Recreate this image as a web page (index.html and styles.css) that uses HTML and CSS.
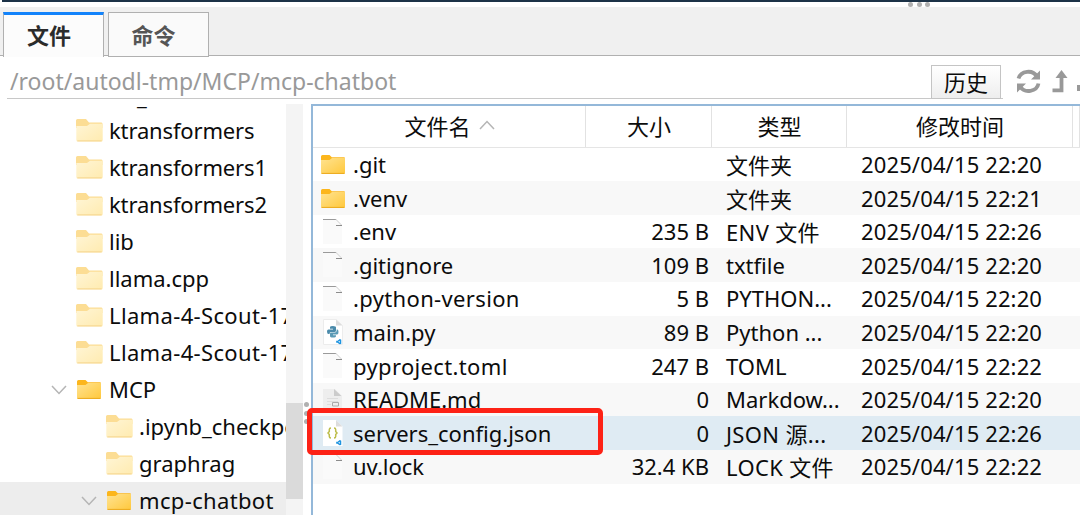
FILE: index.html
```
<!DOCTYPE html>
<html lang="zh-CN">
<head>
    <meta charset="UTF-8">
    <meta name="viewport" content="width=device-width, initial-scale=1.0">
    <title>文件</title>
    <link rel="stylesheet" href="styles.css">
</head>
<body>
    <!-- Shared icons -->
    <svg class="sprite" aria-hidden="true">
        <defs>
            <linearGradient id="gold" x1="0" y1="0" x2="1" y2="1">
                <stop offset="0" stop-color="#ffe391"/>
                <stop offset="1" stop-color="#ffc83c"/>
            </linearGradient>
            <linearGradient id="pale" x1="0" y1="0" x2="1" y2="1">
                <stop offset="0" stop-color="#fff5d5"/>
                <stop offset="1" stop-color="#ffebb0"/>
            </linearGradient>
        </defs>
        <symbol id="folder" viewBox="0 0 24 19">
            <path d="M0 1.5Q0 0 1.5 0H8.5L10.8 2.3H23Q24 2.3 24 3.5V9H0z" fill="#fcb61c"/>
            <path d="M0 5H8.5L11 3H24V17.5Q24 19 22.5 19H1.5Q0 19 0 17.5z" fill="url(#gold)"/>
            <path d="M.5 18.4H23.5" stroke="#eba91e" stroke-width="1"/>
        </symbol>
        <symbol id="folder-pale" viewBox="0 0 27 23">
            <path d="M0 1.5Q0 0 1.5 0H10L13 3.5H25.5Q26.5 3.5 26.5 5V9H0z" fill="#fcdd94"/>
            <path d="M.3 7H11L14 4.8H26.7V21Q26.7 22.5 25.2 22.5H1.8Q.3 22.5 .3 21z" fill="url(#pale)"/>
            <path d="M1.3 21.9H25.7" stroke="#f5d48d" stroke-width="1"/>
        </symbol>
        <symbol id="page" viewBox="0 0 20 26">
            <path d="M0 0H13L19 6V25H0z" fill="#fafafa"/>
            <path d="M0 .5H13.2" stroke="#9a9a9a" fill="none"/>
            <path d="M13 .5L18.5 6" stroke="#cfcfcf" fill="none"/>
            <path d="M13 6.5H19" stroke="#8c8c8c" fill="none"/>
        </symbol>
        <symbol id="code" viewBox="0 0 5 5">
            <path d="M3.4 0L5 .6V4.4L3.4 5 0 2.2 .7 1.3 3.4 3.4V1.6L.7 3.7 0 2.8z" fill="#1f94e0"/>
        </symbol>
    </svg>

    <div class="top-split"><i></i><i></i><i></i></div>

    <div class="tabs">
        <div class="tab active">文件</div>
        <div class="tab">命令</div>
    </div>

    <!-- Path bar -->
    <div class="path-bar">
        <div class="path"><span class="path-text">/root/autodl-tmp/MCP/mcp-chatbot</span><button class="history">历史</button></div>
        <svg class="tools" width="77" height="30" viewBox="0 0 77 30" fill="none">
            <path d="M15.500 12.500A10 9 0 0 1 34 10.500M35.500 17.500A10 9 0 0 1 17 20.500" stroke="#999" stroke-width="3.800"/>
            <path d="M37 4.500V13.500H28z M14 26.500V17.500H23z" fill="#999"/>
            <path d="M49.500 24.300H58.500V11" stroke="#999" stroke-width="3.800"/>
            <path d="M58.500 4L64.500 12H52.500z M74 19H77V25H74z" fill="#999"/>
        </svg>
    </div>

    <div class="main">
        <!-- Directory tree -->
        <div class="tree">
            <ul>
                <li class="cut"><span>_</span></li>
                <li class="tight"><svg class="pale"><use href="#folder-pale"/></svg><span>ktransformers</span></li>
                <li class="tight"><svg class="pale"><use href="#folder-pale"/></svg><span>ktransformers1</span></li>
                <li class="tight"><svg class="pale"><use href="#folder-pale"/></svg><span>ktransformers2</span></li>
                <li><svg class="pale"><use href="#folder-pale"/></svg><span>lib</span></li>
                <li><svg class="pale"><use href="#folder-pale"/></svg><span>llama.cpp</span></li>
                <li class="loose"><svg class="pale"><use href="#folder-pale"/></svg><span>Llama-4-Scout-17B</span></li>
                <li class="loose"><svg class="pale"><use href="#folder-pale"/></svg><span>Llama-4-Scout-17B</span></li>
                <li class="open"><svg class="arrow" viewBox="0 0 16 10"><path d="M1 1L8 8.500L15 1"/></svg><svg class="gold"><use href="#folder"/></svg><span>MCP</span></li>
                <li class="child"><svg class="pale"><use href="#folder-pale"/></svg><span>.ipynb_checkpoints</span></li>
                <li class="child"><svg class="pale"><use href="#folder-pale"/></svg><span>graphrag</span></li>
                <li class="child open selected loose"><svg class="arrow" viewBox="0 0 16 10"><path d="M1 1L8 8.500L15 1"/></svg><svg class="gold"><use href="#folder"/></svg><span>mcp-chatbot</span></li>
            </ul>
        </div>
        <div class="scrollbar"><div class="thumb"></div></div>
        <div class="splitter"><i></i><i></i><i></i></div>

        <!-- File list -->
        <div class="files">
            <div class="row head">
                <div>文件名<svg class="sort" viewBox="0 0 16 10"><path d="M1 9L8 1.500L15 9"/></svg></div>
                <div>大小</div>
                <div>类型</div>
                <div>修改时间</div>
                <div></div>
            </div>
            <div class="row">
                <div class="name"><svg class="gold"><use href="#folder"/></svg><span>.git</span></div>
                <div class="size"></div><div class="type">文件夹</div><div class="date">2025/04/15 22:20</div>
            </div>
            <div class="row">
                <div class="name"><svg class="gold"><use href="#folder"/></svg><span>.venv</span></div>
                <div class="size"></div><div class="type">文件夹</div><div class="date">2025/04/15 22:21</div>
            </div>
            <div class="row">
                <div class="name"><svg class="doc"><use href="#page"/></svg><span>.env</span></div>
                <div class="size">235 B</div><div class="type loose">ENV 文件</div><div class="date">2025/04/15 22:26</div>
            </div>
            <div class="row">
                <div class="name"><svg class="doc"><use href="#page"/></svg><span>.gitignore</span></div>
                <div class="size">109 B</div><div class="type">txtfile</div><div class="date">2025/04/15 22:20</div>
            </div>
            <div class="row">
                <div class="name loose"><svg class="doc"><use href="#page"/></svg><span>.python-version</span></div>
                <div class="size">5 B</div><div class="type">PYTHON...</div><div class="date">2025/04/15 22:20</div>
            </div>
            <div class="row">
                <div class="name">
                    <svg class="doc" viewBox="0 0 20 26">
                        <path d="M.5 .5H13L19.500 6.500V25.500H.5z" fill="#fff" stroke="#ececec"/>
                        <path d="M13 .5V6.500H19.500z" fill="#ddd"/>
                        <path d="M7 8Q7 7 10 7T13 8.500V11.500Q13 13 11.500 13H8Q6.500 13 6.500 15H5.500Q4 15 4 12.500T6 10.500H10V9.800H7z" fill="#4b8bab"/>
                        <path d="M13 17Q13 18.500 10 18.500T7 17V14.500Q7 13.500 8.500 13.500H12Q13.700 13.500 13.700 10.500H14.500Q15.500 10.500 15.500 13T14 15.500H10V16.200H13z" fill="#5a9ab5"/>
                        <use href="#code" x="13" y="20" width="5.500" height="5.500"/>
                    </svg>
                    <span>main.py</span>
                </div>
                <div class="size">89 B</div><div class="type">Python ...</div><div class="date">2025/04/15 22:20</div>
            </div>
            <div class="row">
                <div class="name loose"><svg class="doc"><use href="#page"/></svg><span>pyproject.toml</span></div>
                <div class="size">247 B</div><div class="type">TOML</div><div class="date">2025/04/15 22:22</div>
            </div>
            <div class="row">
                <div class="name">
                    <svg class="doc" viewBox="0 0 20 26">
                        <path d="M0 2H12L19 9V22H0z" fill="#eee"/>
                        <path d="M11 2V9H18.500z" fill="#ccc"/>
                        <path d="M4 11.500H15M4 14.500H15M4 17.500H8" stroke="#ddd"/>
                        <path d="M9.500 15.500H15.500V19H9.500z" fill="#eee" stroke="#aaa"/>
                    </svg>
                    <span>README.md</span>
                </div>
                <div class="size">0</div><div class="type">Markdow...</div><div class="date">2025/04/15 22:20</div>
            </div>
            <div class="row selected">
                <div class="name">
                    <svg class="doc" viewBox="0 0 20 26">
                        <path d="M0 0H13L19.500 6.500V26H0z" fill="#fff"/>
                        <path d="M13 0V6.500H19.500z" fill="#ddd"/>
                        <path d="M8 8Q6.300 8 6.300 9.500V11.500L5 13L6.300 14.500V16.500Q6.300 18 8 18M11 8Q12.700 8 12.700 9.500V11.500L14 13L12.700 14.500V16.500Q12.700 18 11 18" fill="none" stroke="#bdbd4a" stroke-width="1.500"/>
                        <use href="#code" x="13" y="20" width="5.500" height="5.500"/>
                    </svg>
                    <span>servers_config.json</span>
                </div>
                <div class="size">0</div><div class="type loose">JSON 源...</div><div class="date">2025/04/15 22:26</div>
                <div class="highlight"></div>
            </div>
            <div class="row">
                <div class="name"><svg class="doc"><use href="#page"/></svg><span>uv.lock</span></div>
                <div class="size">32.4 KB</div><div class="type loose">LOCK 文件</div><div class="date">2025/04/15 22:22</div>
            </div>
        </div>
    </div>
</body>
</html>
```
FILE: styles.css
```
* {
    box-sizing: border-box;
}

body {
    margin: 0;
    height: 515px;
    overflow: hidden;
    display: flex;
    flex-direction: column;
    background-color: #fff;
    color: #0c0c0c;
    font-family: "Noto Sans", "Noto Sans CJK SC", sans-serif;
    font-size: 22px;
}

svg {
    flex: none;
}

.sprite {
    position: absolute;
    width: 0;
    height: 0;
}

.top-split {
    height: 7px;
    flex: none;
    margin-left: 2px;
    border-top: 2px solid #1c3247;
    display: flex;
    gap: 3.5px;
    padding-left: 906px;
}

.top-split i,
.splitter i {
    width: 5px;
    height: 5px;
    border-radius: 50%;
    background-color: #b0b0b0;
}

/* Tabs */
.tabs {
    height: 49px;
    flex: none;
    display: flex;
    gap: 4px;
    padding: 5px 0 0 3px;
    background-color: #f0f0f0;
    border-bottom: 1px solid #b0b0b0;
}

.tab {
    width: 101px;
    height: 45px;
    padding-right: 10px;
    line-height: 45px;
    text-align: center;
    font-weight: bold;
    color: #555;
    background-color: #fafafa;
    border: 1px solid #b0b0b0;
}

.tab.active {
    line-height: 40px;
    padding-right: 9px;
    color: #2b2b2b;
    background-color: #fcfcfc;
    border-top: 3px solid #1283fb;
    border-bottom: none;
}

/* Path bar */
.path-bar {
    height: 48px;
    flex: none;
    display: flex;
    padding: 9px 0 0 7px;
}

.path {
    width: 996px;
    height: 34px;
    display: flex;
    justify-content: space-between;
    padding: 0 2px 0 3px;
    border-bottom: 1px solid #c8c8c8;
}

.path-text {
    line-height: 32px;
    font-size: 23px;
    color: #999;
}

.history {
    width: 70px;
    height: 34px;
    padding: 0;
    font: inherit;
    line-height: 32px;
    color: #0c0c0c;
    background: linear-gradient(#fff, #eee);
    border: 1px solid #c4c4c4;
}

.tools {
    margin-top: 1px;
}

.main {
    flex: 1;
    min-height: 0;
    display: flex;
}

.loose {
    letter-spacing: 0.35px;
}

.tight {
    letter-spacing: -0.15px;
}

/* Directory tree */
.tree {
    width: 286px;
    overflow: hidden;
    display: flex;
    flex-direction: column;
}

.tree ul {
    list-style: none;
    margin: -29px 0 0;
    padding: 0;
}

.tree li {
    height: 37px;
    display: flex;
    align-items: center;
    padding-left: 76px;
    white-space: nowrap;
}

.tree li span {
    margin-top: -2px;
    margin-left: -1px;
}

.tree .cut {
    padding: 7px 0 0 138px;
}

.tree .child {
    padding-left: 106px;
}

.tree .open {
    padding-left: 51px;
}

.tree .child.open {
    padding-left: 81px;
}

.tree .selected {
    background-color: #ededed;
}

.arrow,
.sort {
    width: 16px;
    height: 10px;
    fill: none;
    stroke: #b5b5b5;
    stroke-width: 1.500;
}

.pale {
    width: 27px;
    height: 23px;
    margin: 0 7px 1px 0;
}

.gold {
    width: 24px;
    height: 19px;
}

.tree .gold {
    margin: 0 9px 1px 10px;
}

.scrollbar {
    width: 17px;
    padding-top: 299px;
    background-color: #f4f4f4;
}

.thumb {
    height: 96px;
    background-color: #dadada;
}

.splitter {
    width: 8px;
    padding: 298px 0 0 1px;
    display: flex;
    flex-direction: column;
    gap: 3.500px;
}

/* File list */
.files {
    flex: 1;
    border: 2px solid #94b8d9;
    border-width: 2px 0 0 2px;
}

.row {
    position: relative;
    height: 33.600px;
    display: grid;
    grid-template-columns: 273px 126px 135px 226px 1fr;
    align-items: center;
    white-space: nowrap;
}

.row:nth-child(odd) {
    background-color: #f8f8f8;
}

.row.head {
    height: 41.700px;
    background-color: #fff;
    border-bottom: 1.500px solid #e5e5e5;
}

.head div {
    height: 100%;
    display: flex;
    align-items: center;
    justify-content: center;
    padding: 0 0 2px 1px;
    border-right: 1px solid #e2e2e2;
}

.sort {
    margin-left: 8px;
}

.row.selected {
    z-index: 1;
    background-color: #dfebf3;
}

.name {
    display: flex;
    align-items: center;
    padding-left: 8px;
}

.name span,
.size,
.type,
.date {
    margin-top: -1px;
}

.name .gold {
    margin-right: 8px;
}

.doc {
    width: 20px;
    height: 26px;
    margin: 0 10px 0 2px;
}

.size {
    text-align: right;
    padding-right: 3px;
}

.type {
    padding-left: 14px;
}

.date {
    padding-left: 14px;
    letter-spacing: 0.13px;
}

.highlight {
    position: absolute;
    left: -6px;
    top: -8px;
    width: 296px;
    height: 47px;
    border: 5px solid #fd2216;
    border-radius: 5px;
}
```
